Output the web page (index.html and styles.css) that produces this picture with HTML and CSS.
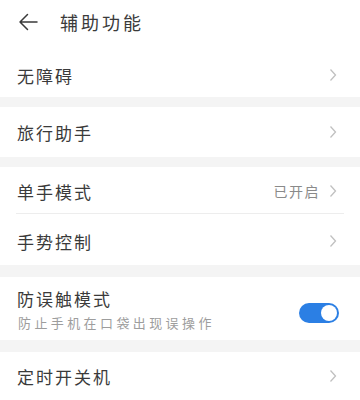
FILE: index.html
```html
<!DOCTYPE html>
<html lang="zh">
<head>
<meta charset="utf-8">
<link rel="stylesheet" href="styles.css">
</head>
<body>
<div class="page">
  <header class="header">
    <svg class="back" width="20" height="18" viewBox="0 0 20 18"><path d="M19 9H2M9.5 1.5L2 9l7.5 7.5" fill="none" stroke="#3a3a3a" stroke-width="1.5" stroke-linecap="round" stroke-linejoin="round"/></svg>
    <span class="title">辅助功能</span>
  </header>

  <div class="row r1"><span class="label">无障碍</span><span class="right"><svg class="chev" width="8" height="14" viewBox="0 0 8 14"><polyline points="1.5,1.5 6.5,7 1.5,12.5" fill="none" stroke="#c0c0c0" stroke-width="1.3"/></svg></span></div>
  <div class="band"></div>
  <div class="row r2"><span class="label">旅行助手</span><span class="right"><svg class="chev" width="8" height="14" viewBox="0 0 8 14"><polyline points="1.5,1.5 6.5,7 1.5,12.5" fill="none" stroke="#c0c0c0" stroke-width="1.3"/></svg></span></div>
  <div class="band"></div>
  <div class="row r3"><span class="label">单手模式</span><span class="right"><span class="value">已开启</span><svg class="chev" width="8" height="14" viewBox="0 0 8 14"><polyline points="1.5,1.5 6.5,7 1.5,12.5" fill="none" stroke="#c0c0c0" stroke-width="1.3"/></svg></span></div>
  <div class="divider"></div>
  <div class="row r4"><span class="label">手势控制</span><span class="right"><svg class="chev" width="8" height="14" viewBox="0 0 8 14"><polyline points="1.5,1.5 6.5,7 1.5,12.5" fill="none" stroke="#c0c0c0" stroke-width="1.3"/></svg></span></div>
  <div class="band wide"></div>
  <div class="row r5">
    <div class="texts">
      <span class="label">防误触模式</span>
      <span class="sub">防止手机在口袋出现误操作</span>
    </div>
    <span class="toggle"><span class="knob"></span></span>
  </div>
  <div class="band wide"></div>
  <div class="row r6"><span class="label">定时开关机</span><span class="right"><svg class="chev" width="8" height="14" viewBox="0 0 8 14"><polyline points="1.5,1.5 6.5,7 1.5,12.5" fill="none" stroke="#c0c0c0" stroke-width="1.3"/></svg></span></div>
</div>
</body>
</html>
```

FILE: styles.css
```css
* { box-sizing: border-box; }
html, body { margin: 0; padding: 0; background: #fff; }
body {
  font-family: "Noto Sans CJK SC", "Noto Sans", sans-serif;
  color: #3a3a3a;
  width: 360px;
  height: 400px;
  overflow: hidden;
}
.page { display: flex; flex-direction: column; }
.header {
  height: 50px;
  display: flex;
  align-items: center;
  padding: 0 0 6px 18px;
}
.back { flex: none; display: block; }
.title {
  margin-left: 22px;
  font-size: 18px;
  letter-spacing: 3px;
  color: #3a3a3a;
  line-height: 1;
}
.row {
  display: flex;
  align-items: center;
  justify-content: space-between;
  padding: 0 23px 0 17px;
}
.label {
  font-size: 17px;
  letter-spacing: 2px;
  line-height: 1;
  color: #3a3a3a;
}
.right { display: flex; align-items: center; }
.chev { display: block; }
.value {
  font-size: 14px;
  letter-spacing: 1.5px;
  color: #8a8a8a;
  margin-right: 9px;
  line-height: 1;
}
.r1 { height: 47px; padding-top: 3px; }
.r2 { height: 50px; }
.r3 { height: 46px; padding-top: 2px; }
.r4 { height: 51px; padding-top: 3px; }
.r5 { height: 63px; padding-top: 2px; }
.r6 { height: 48px; }
.band { height: 10px; background: #f4f4f4; }
.band.wide { height: 12px; }
.divider { height: 1px; background: #ededed; margin: 0 16px; }
.texts { display: flex; flex-direction: column; gap: 9px; }
.sub {
  font-size: 13px;
  letter-spacing: 3.4px;
  color: #9d9d9d;
  line-height: 1;
  margin-left: 1px;
}
.toggle {
  width: 40px;
  height: 20px;
  border-radius: 10px;
  background: #2b7fe4;
  display: flex;
  align-items: center;
  justify-content: flex-end;
  padding-right: 2px;
  margin-right: -2px;
  margin-top: 6px;
}
.knob {
  width: 16px;
  height: 16px;
  border-radius: 50%;
  background: #fff;
}
```
